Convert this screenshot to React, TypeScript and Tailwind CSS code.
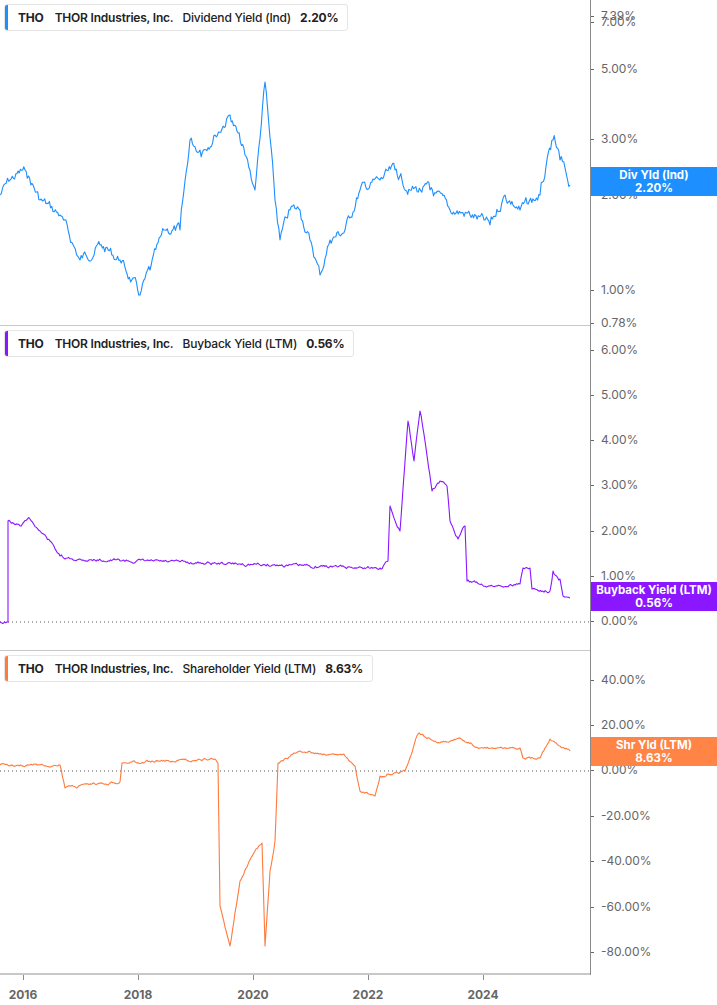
import React from "react";

type P = [number, number];
function build(pts: P[], amp: number, seed: number): string {
  let s = seed;
  const rnd = () => { s = (s * 9301 + 49297) % 233280; return s / 233280 - 0.5; };
  const out: string[] = [];
  let walk = 0;
  for (let i = 0; i < pts.length - 1; i++) {
    const [x1, y1] = pts[i], [x2, y2] = pts[i + 1];
    const n = Math.max(1, Math.round((x2 - x1) / 1.2));
    for (let k = 0; k < n; k++) {
      const t = k / n;
      const x = x1 + (x2 - x1) * t;
      walk = walk * 0.7 + rnd() * amp;
      const y = y1 + (y2 - y1) * t + (k === 0 ? 0 : walk);
      out.push(`${x.toFixed(1)},${y.toFixed(1)}`);
    }
  }
  const l = pts[pts.length - 1];
  out.push(`${l[0]},${l[1]}`);
  return out.join(" ");
}

const p1: P[] = [[0,195],[10,180],[25,170],[40,200],[60,215],[80,260],[100,245],[120,260],[140,295],[150,270],[165,230],[180,230],[190,140],[200,150],[215,135],[230,115],[245,155],[255,190],[265,82],[275,200],[280,240],[290,210],[300,210],[310,240],[320,275],[330,240],[345,230],[360,190],[380,180],[395,170],[410,190],[430,190],[450,210],[470,215],[490,225],[505,195],[520,210],[540,195],[553,140],[560,160],[570,185]];
const p2: P[] = [[0,296],[8,296],[8,195],[20,200],[30,193],[40,205],[50,215],[60,230],[65,233],[380,242],[388,235],[390,180],[400,205],[408,95],[414,135],[420,85],[425,115],[432,165],[440,155],[447,160],[450,195],[458,213],[465,200],[467,255],[490,260],[520,258],[523,242],[530,242],[532,263],[550,265],[553,245],[560,253],[563,270],[570,272]];
const p3: P[] = [[0,114],[60,114],[65,137],[120,131],[122,112],[215,108],[218,112],[220,255],[230,295],[240,230],[255,200],[262,192],[265,295],[270,220],[275,190],[278,112],[300,100],[345,105],[355,115],[360,140],[375,145],[380,125],[405,120],[418,83],[440,92],[460,87],[480,97],[520,97],[523,107],[540,107],[550,88],[560,95],[570,100]];

type Panel = {
  color: string; metric: string; value: string; pts: P[]; amp: number; seed: number;
  labels: [string, number][]; badgeTop: number; badge: string; badgeBg: string; dotted?: number; borderTop?: boolean;
};

const panels: Panel[] = [
  { color: "#1e8fff", metric: "Dividend Yield (Ind)", value: "2.20%", pts: p1, amp: 9, seed: 7,
    labels: [["7.39%",16],["7.00%",22],["5.00%",69],["3.00%",139],["2.00%",195],["1.00%",290],["0.78%",323]],
    badgeTop: 167, badge: "Div Yld (Ind)", badgeBg: "bg-[#1e8fff]" },
  { color: "#8a17ff", metric: "Buyback Yield (LTM)", value: "0.56%", pts: p2, amp: 2.5, seed: 13,
    labels: [["6.00%",25],["5.00%",70],["4.00%",115],["3.00%",160],["2.00%",206],["1.00%",251],["0.00%",296]],
    badgeTop: 257, badge: "Buyback Yield (LTM)", badgeBg: "bg-[#8a17ff]", dotted: 296, borderTop: true },
  { color: "#ff7a3d", metric: "Shareholder Yield (LTM)", value: "8.63%", pts: p3, amp: 2, seed: 21,
    labels: [["40.00%",30],["20.00%",75],["0.00%",120],["-20.00%",166],["-40.00%",211],["-60.00%",257],["-80.00%",302]],
    badgeTop: 87, badge: "Shr Yld (LTM)", badgeBg: "bg-[#ff8445]", dotted: 120, borderTop: true },
];

export default function App() {
  return (
    <div className="w-[717px] h-[1005px] bg-white overflow-hidden" style={{ fontFamily: "Inter, 'Liberation Sans', sans-serif" }}>
      {panels.map((p, i) => (
        <div key={i} className="flex h-[325px]">
          <div className={`relative w-[590px] h-full ${p.borderTop ? "border-t border-[#c8c8c8]" : ""} ${i === 2 ? "border-b-2 border-[#8a8a8a]" : ""}`}>
            <svg className="absolute inset-0" width="590" height="325">
              {p.dotted !== undefined && (
                <line x1="0" x2="590" y1={p.dotted} y2={p.dotted} stroke="#555" strokeWidth="1" strokeDasharray="1 3" />
              )}
              <polyline points={build(p.pts, p.amp, p.seed)} fill="none" stroke={p.color} strokeWidth="1.1" strokeLinejoin="round" />
            </svg>
            <div className="absolute left-[4px] top-[4px] flex items-center h-[27px] bg-white border border-[#e5e5e5] rounded-[3px] pr-[9px] text-[12px] text-[#222] gap-[9px] overflow-hidden tracking-[-0.2px]">
              <div className="w-[3px] h-full mr-[1px]" style={{ background: p.color }} />
              <span className="font-bold">THO</span>
              <span className="font-semibold ml-[2px]">THOR Industries, Inc.</span>
              <span className="font-medium">{p.metric}</span>
              <span className="font-bold">{p.value}</span>
            </div>
          </div>
          <div className="relative w-[127px] h-full border-l-[1.5px] border-[#8a8a8a]">
            {p.labels.map(([t, y]) => (
              <div key={t} className="absolute left-0 flex items-center text-[12px] text-[#666]" style={{ top: y - 8, height: 16 }}>
                <span className="w-[3px] h-px bg-[#666] mr-[7px]" />
                {t}
              </div>
            ))}
            <div className={`absolute left-0 right-0 h-[29px] ${p.badgeBg} text-white text-[11.5px] font-bold leading-[13px] flex flex-col items-center justify-center`} style={{ top: p.badgeTop }}>
              <span>{p.badge}</span>
              <span>{p.value}</span>
            </div>
          </div>
        </div>
      ))}
      <div className="relative w-[590px] h-[30px]">
        {["2016","2018","2020","2022","2024"].map((y, i) => (
          <div key={y} className="absolute top-0 flex flex-col items-center" style={{ left: 23 + i * 115 - 20, width: 40 }}>
            <span className="w-px h-[5px] bg-[#8a8a8a]" />
            <span className="mt-[6px] text-[12px] font-bold text-[#666]">{y}</span>
          </div>
        ))}
      </div>
    </div>
  );
}
